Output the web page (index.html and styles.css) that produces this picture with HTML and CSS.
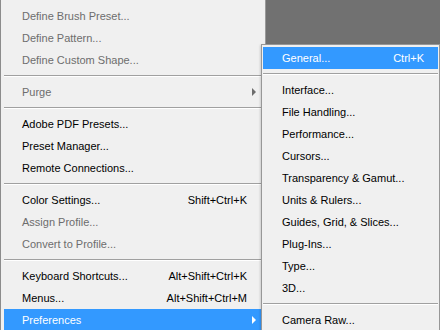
FILE: index.html
```html
<!DOCTYPE html>
<html lang="en">
<head>
  <meta charset="UTF-8">
  <title>Edit Menu - Preferences</title>
  <link rel="stylesheet" href="styles.css">
</head>
<body>
  <div class="screen">
    <!-- Main edit menu (lower part) -->
    <ul class="menu main">
      <li class="item off"><span>Define Brush Preset...</span></li>
      <li class="item off"><span>Define Pattern...</span></li>
      <li class="item off"><span>Define Custom Shape...</span></li>
      <li class="sep"></li>
      <li class="item off"><span>Purge</span><span></span><span class="arrow"></span></li>
      <li class="sep"></li>
      <li class="item"><span>Adobe PDF Presets...</span></li>
      <li class="item"><span>Preset Manager...</span></li>
      <li class="item"><span>Remote Connections...</span></li>
      <li class="sep"></li>
      <li class="item"><span>Color Settings...</span><span class="key">Shift+Ctrl+K</span></li>
      <li class="item off"><span>Assign Profile...</span></li>
      <li class="item off"><span>Convert to Profile...</span></li>
      <li class="sep"></li>
      <li class="item"><span>Keyboard Shortcuts...</span><span class="key">Alt+Shift+Ctrl+K</span></li>
      <li class="item"><span>Menus...</span><span class="key">Alt+Shift+Ctrl+M</span></li>
      <li class="item active"><span>Preferences</span><span></span><span class="arrow"></span></li>
    </ul>

    <!-- Preferences submenu -->
    <ul class="menu sub">
      <li class="item active"><span>General...</span><span class="key">Ctrl+K</span></li>
      <li class="sep"></li>
      <li class="item"><span>Interface...</span></li>
      <li class="item"><span>File Handling...</span></li>
      <li class="item"><span>Performance...</span></li>
      <li class="item"><span>Cursors...</span></li>
      <li class="item"><span>Transparency &amp; Gamut...</span></li>
      <li class="item"><span>Units &amp; Rulers...</span></li>
      <li class="item"><span>Guides, Grid, &amp; Slices...</span></li>
      <li class="item"><span>Plug-Ins...</span></li>
      <li class="item"><span>Type...</span></li>
      <li class="item"><span>3D...</span></li>
      <li class="sep"></li>
      <li class="item"><span>Camera Raw...</span></li>
    </ul>
  </div>
</body>
</html>
```

FILE: styles.css
```css
/* --- Base --- */
*{box-sizing:border-box;margin:0;padding:0}
body{background:#717171;font-family:"Liberation Sans",Arial,sans-serif;font-size:11px;color:#000}
.screen{position:relative;width:440px;height:330px;overflow:hidden}

/* --- Menus --- */
.menu{list-style:none;background:#f0f0f0}
.main{width:266px;height:330px;padding:5px 2px 0 3px;border-left:1px solid #8c8c8c;border-right:1px solid #9a9a9a}
.sub{position:absolute;left:261px;top:44px;width:179px;height:300px;padding:2px 1px;border:1px solid #979797;box-shadow:-1px 1px 2px rgba(0,0,0,.15)}

.item{display:grid;grid-template-columns:1fr auto 9px;align-items:center;height:22px;padding:0 7px 0 18px;white-space:nowrap}
.sub .item{grid-template-columns:1fr auto;padding:0 14px 0 19px}
.item.off{color:#6d6d6d}
.item.active{background:#3399ff;color:#fff}

.arrow{justify-self:end;width:0;height:0;border-top:4px solid transparent;border-bottom:4px solid transparent;border-left:4px solid #000}
.off .arrow{border-left-color:#6d6d6d}
.active .arrow{border-left-color:#fff}

/* --- Separators --- */
.sep{height:10px;padding-top:4px}
.sep::before{content:"";display:block;border-top:1px solid #a0a0a0;border-bottom:1px solid #fff}
```
